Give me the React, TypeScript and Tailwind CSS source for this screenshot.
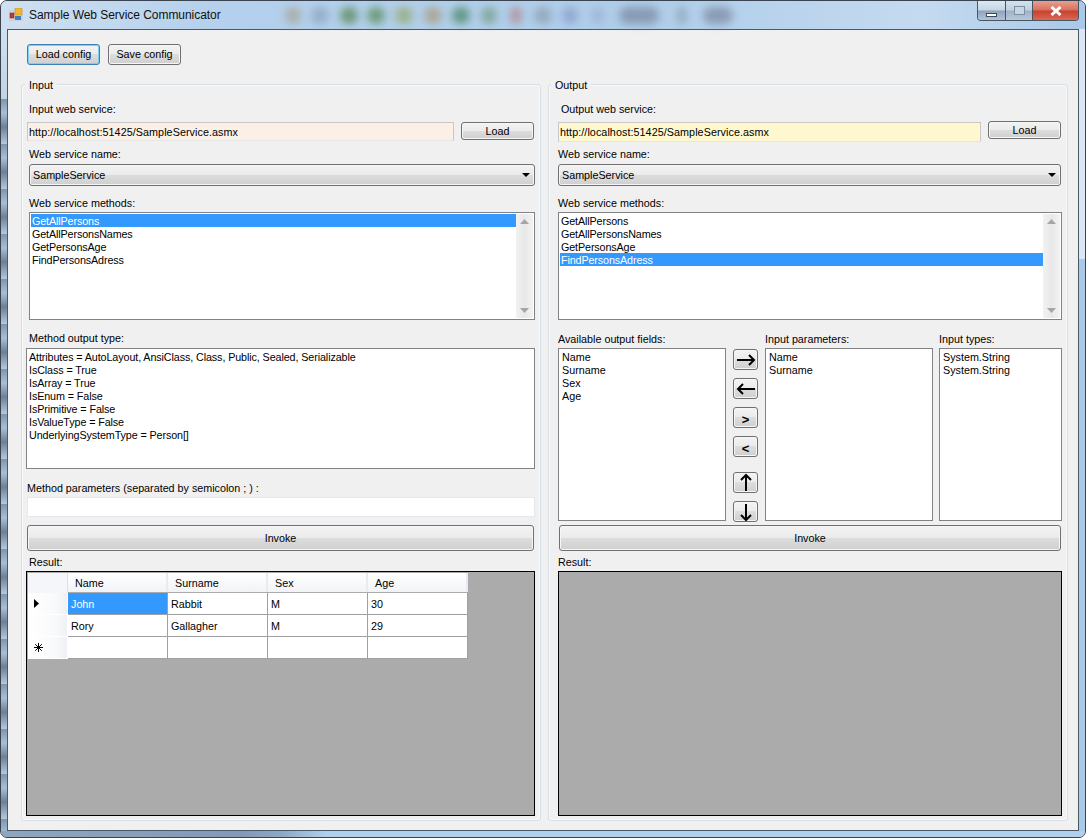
import type { ReactNode } from 'react';

const font = { fontFamily: '"Liberation Sans", Arial, sans-serif' };

const blobs = [
  { w: 'w-[16px]', ml: 'ml-0', c: 'bg-[#a8a89a]' },
  { w: 'w-[18px]', ml: 'ml-[10px]', c: 'bg-[#8fa6c0]' },
  { w: 'w-[18px]', ml: 'ml-[11px]', c: 'bg-[#5f8a5c]' },
  { w: 'w-[18px]', ml: 'ml-[9px]', c: 'bg-[#5f9060]' },
  { w: 'w-[18px]', ml: 'ml-[10px]', c: 'bg-[#97aa78]' },
  { w: 'w-[18px]', ml: 'ml-[11px]', c: 'bg-[#a89f80]' },
  { w: 'w-[18px]', ml: 'ml-[10px]', c: 'bg-[#4f8a68]' },
  { w: 'w-[16px]', ml: 'ml-[11px]', c: 'bg-[#7ba08c]' },
  { w: 'w-[12px]', ml: 'ml-[13px]', c: 'bg-[#b08a90]' },
  { w: 'w-[18px]', ml: 'ml-[12px]', c: 'bg-[#8ea2b4]' },
  { w: 'w-[16px]', ml: 'ml-[10px]', c: 'bg-[#8c9fcc]' },
  { w: 'w-[14px]', ml: 'ml-[13px]', c: 'bg-[#9db5d2]' },
  { w: 'w-[40px]', ml: 'ml-[14px]', c: 'bg-[#7f8fa6]' },
  { w: 'w-[8px]', ml: 'ml-[19px]', c: 'bg-[#8a9bb2]' },
  { w: 'w-[30px]', ml: 'ml-[17px]', c: 'bg-[#7f8fa6]' },
];

function Label({ children, className = '' }: { children: ReactNode; className?: string }) {
  return <div className={`h-[13px] leading-[13px] whitespace-nowrap ${className}`}>{children}</div>;
}

function Btn({ children, className = '', focused }: { children: ReactNode; className?: string; focused?: boolean }) {
  return (
    <div
      className={`flex items-center justify-center rounded-[3px] border leading-none bg-[linear-gradient(#f3f3f3_0%,#ebebeb_48%,#dddddd_50%,#cfcfcf_100%)] ${
        focused
          ? 'border-[#3c7fb1] shadow-[inset_0_0_0_1px_#7fd0f0]'
          : 'border-[#707070] shadow-[inset_0_0_0_1px_#f6f6f6]'
      } ${className}`}
    >
      {children}
    </div>
  );
}

function Box({ items, selected, className = '', scroll, inset }: { items: string[]; selected?: number; className?: string; scroll?: boolean; inset?: boolean }) {
  return (
    <div className={`flex bg-white border border-[#828282] ${className}`}>
      <div className={`flex-1 min-w-0 pt-px ${inset ? 'pl-[2px]' : 'pl-px'} ${scroll ? '' : 'pr-px'}`}>
        {items.map((item, i) => (
          <div
            key={item + i}
            className={`h-[13px] leading-[15px] pl-[1px] whitespace-nowrap ${i === selected ? 'bg-[#3399ff] text-white' : ''}`}
          >
            {item}
          </div>
        ))}
      </div>
      {scroll && (
        <div className="w-[17px] my-px mr-px bg-[linear-gradient(90deg,#f2f2f2,#e8e8e8_50%,#f2f2f2)] flex flex-col items-center justify-between py-[5px]">
          <svg width="9" height="5" viewBox="0 0 9 5"><path d="M4.5 0 9 5H0z" fill="#a6a6a6" /></svg>
          <svg width="9" height="5" viewBox="0 0 9 5"><path d="M0 0h9L4.5 5z" fill="#a6a6a6" /></svg>
        </div>
      )}
    </div>
  );
}

function Select({ className = '' }: { className?: string }) {
  return (
    <Btn className={`!justify-between h-[22px] pl-[3px] pr-[4px] ${className}`}>
      <span>SampleService</span>
      <svg width="8" height="4" viewBox="0 0 8 4"><path d="M0 0h8L4 4z" fill="#000" /></svg>
    </Btn>
  );
}

function Arrow({ d }: { d: string }) {
  return (
    <svg width="20" height="20" viewBox="0 0 20 20" fill="none" stroke="#000" strokeWidth="2">
      <path d={d} />
    </svg>
  );
}

function Group({ title, legendClass, children, className = '' }: { title: string; legendClass: string; children: ReactNode; className?: string }) {
  return (
    <div className={`flex flex-col h-[737px] rounded-[3px] border border-[#d5dfe5] shadow-[inset_0_0_0_1px_#f8f9fa] ${className}`}>
      <div className={`h-[13px] leading-[15px] -mt-[7px] w-fit px-[4px] bg-[#f0f0f0] ${legendClass}`}>{title}</div>
      {children}
    </div>
  );
}

function Grid({ children }: { children?: ReactNode }) {
  return <div className="h-[245px] mt-[2px] bg-[#ababab] border border-black p-px">{children}</div>;
}

const columns = ['Name', 'Surname', 'Sex', 'Age'];
const rows = [
  ['John', 'Rabbit', 'M', '30'],
  ['Rory', 'Gallagher', 'M', '29'],
  ['', '', '', ''],
];

function ResultTable() {
  return (
    <div className="w-[440px]">
      <div className="flex h-[20px]">
        <div className="w-[40px] bg-[#f4f6f9] border-r border-[#e0e0e0]" />
        {columns.map((c) => (
          <div
            key={c}
            className="w-[100px] h-[19px] pl-[7px] leading-[20px] border-r-2 border-[#e8ecf2] bg-[linear-gradient(#ffffff_0%,#f8f9fb_50%,#f2f3f6_100%)]"
          >
            {c}
          </div>
        ))}
      </div>
      {rows.map((r, i) => (
        <div key={i} className="flex h-[22px]">
          <div className="w-[40px] h-[22px] flex items-center pl-[6px] bg-[linear-gradient(90deg,#ffffff_0%,#f8f9fb_75%,#eef0f3_100%)] border-r border-b border-[#ffffff]">
            {i === 0 && (
              <svg width="5" height="9" viewBox="0 0 5 9"><path d="M0 0l5 4.5L0 9z" fill="#000" /></svg>
            )}
            {i === 2 && (
              <svg width="9" height="9" viewBox="0 0 9 9" stroke="#000" strokeWidth="1">
                <path d="M4.5 0v9M0 4.5h9M1.2 1.2l6.6 6.6M7.8 1.2 1.2 7.8" />
              </svg>
            )}
          </div>
          {r.map((cell, j) => (
            <div
              key={j}
              className={`w-[100px] h-[22px] pl-[3px] leading-[23px] border-r border-b border-[#a0a0a0] ${
                i === 0 && j === 0 ? 'bg-[#3399ff] text-white' : 'bg-white'
              }`}
            >
              {cell}
            </div>
          ))}
        </div>
      ))}
    </div>
  );
}

export default function App() {
  return (
    <div
      style={font}
      className="w-[1086px] h-[838px] overflow-hidden flex flex-col rounded-[7px] border border-[#3a4350] text-[10.75px] text-black bg-[#a9c9e8]"
    >
      <div className="h-[28px] shrink-0 flex items-center bg-[linear-gradient(90deg,#cfe0f1_0%,#b4d0ec_20%,#afcde9_60%,#c4daf0_85%,#a9c9e8_100%)]">
        <svg className="ml-[8px] shrink-0" width="14" height="14" viewBox="0 0 14 14">
          <rect x="0" y="2" width="14" height="11" fill="#cfd3d8" />
          <rect x="1" y="5" width="4" height="5" fill="#c0392b" stroke="#7a2a20" strokeWidth="0.5" />
          <rect x="6" y="0" width="7" height="7" fill="#f2b632" stroke="#b8862a" strokeWidth="0.5" />
          <rect x="6" y="8" width="6" height="4" fill="#3b7fc4" />
        </svg>
        <div className="ml-[6px] w-[256px] text-[12px] tracking-[-0.05px] text-[#101010] whitespace-nowrap">
          Sample Web Service Communicator
        </div>
        <div className="flex items-center">
          {blobs.map((b, i) => (
            <div key={i} className={`h-[17px] rounded-full blur-[4px] opacity-80 ${b.w} ${b.ml} ${b.c}`} />
          ))}
        </div>
        <div className="ml-auto mr-[6px] -mt-[8px] h-[20px] flex rounded-b-[4px] border border-t-0 border-[#4a5564] overflow-hidden">
          <div className="w-[28px] flex items-end justify-center pb-[3px] border-r border-[#4a5564] bg-[linear-gradient(#dce8f4_0%,#c6d6e6_48%,#8ea4ba_52%,#b0c4d8_100%)]">
            <div className="w-[11px] h-[4px] bg-white border border-[#3c4a5c]" />
          </div>
          <div className="w-[27px] flex items-center justify-center border-r border-[#4a5564] bg-[linear-gradient(#d4e2f0_0%,#c0d0e0_48%,#9fb3c6_52%,#b6c8da_100%)]">
            <div className="w-[11px] h-[9px] border border-[#7f8fa0] bg-[#c6d6e4]" />
          </div>
          <div className="w-[45px] flex items-center justify-center bg-[linear-gradient(#e8a090_0%,#d8705c_48%,#c8402c_52%,#d86a54_100%)]">
            <svg width="12" height="10" viewBox="0 0 12 10" stroke="#fff" strokeWidth="3">
              <path d="M1.5 1l9 8M10.5 1l-9 8" />
            </svg>
          </div>
        </div>
      </div>

      <div className="flex h-[802px] shrink-0">
        <div className="w-[6px] flex flex-col">
          <div className="h-[70px] bg-[linear-gradient(#cfe0f1,#c2d3e2)]" />
          <div className="flex-1 bg-[repeating-linear-gradient(#7e95ae_0px,#a7bfd6_14px,#6c8096_28px,#b4c9de_45px)]" />
        </div>
        <div className="w-[1072px] border border-[#4b5866] bg-[#f0f0f0]">
          <div className="flex pl-[19px] pt-[14px] gap-[8px]">
            <Btn focused className="w-[73px] h-[21px]">Load config</Btn>
            <Btn className="w-[73px] h-[21px]">Save config</Btn>
          </div>

          <div className="flex mt-[19px] pl-[13px] gap-[7px]">
            <Group title="Input" legendClass="ml-[3px]" className="w-[520px]">
              <Label className="mt-[12px] ml-[7px]">Input web service:</Label>
              <div className="flex mt-[6px] ml-[5px] gap-[7px]">
                <div className="w-[427px] h-[19px] pl-[1px] leading-[19px] tracking-[0.07px] bg-[#fbf0e6] border border-[#c8c8c8] border-b-[#e6e6e6]">
                  http://localhost:51425/SampleService.asmx
                </div>
                <Btn className="w-[73px] h-[18px]">Load</Btn>
              </div>
              <Label className="mt-[7px] ml-[7px]">Web service name:</Label>
              <Select className="mt-[3px] ml-[7px] w-[506px]" />
              <Label className="mt-[11px] ml-[7px]">Web service methods:</Label>
              <Box
                scroll
                selected={0}
                items={['GetAllPersons', 'GetAllPersonsNames', 'GetPersonsAge', 'FindPersonsAdress']}
                className="mt-[2px] ml-[7px] w-[506px] h-[108px] tracking-[-0.12px]"
              />
              <Label className="mt-[12px] ml-[7px]">Method output type:</Label>
              <Box
                items={[
                  'Attributes = AutoLayout, AnsiClass, Class, Public, Sealed, Serializable',
                  'IsClass = True',
                  'IsArray = True',
                  'IsEnum = False',
                  'IsPrimitive = False',
                  'IsValueType = False',
                  'UnderlyingSystemType = Person[]',
                ]}
                className="mt-[3px] ml-[4px] w-[509px] h-[121px] tracking-[-0.1px]"
              />
              <Label className="mt-[13px] ml-[5px]">Method parameters (separated by semicolon ; ) :</Label>
              <div className="mt-[2px] ml-[5px] w-[508px] h-[20px] bg-white border border-[#e3e9ef]" />
              <Btn className="mt-[8px] ml-[5px] w-[507px] h-[26px]">Invoke</Btn>
              <Label className="mt-[5px] ml-[7px]">Result:</Label>
              <div className="ml-[4px] w-[509px]">
                <Grid>
                  <ResultTable />
                </Grid>
              </div>
            </Group>

            <Group title="Output" legendClass="ml-[2px]" className="w-[520px]">
              <Label className="mt-[12px] ml-[12px]">Output web service:</Label>
              <div className="flex mt-[6px] ml-[9px] gap-[7px]">
                <div className="w-[423px] h-[20px] pl-[1px] leading-[19px] tracking-[0.07px] bg-[#fff8cf] border border-[#c8c8c8] border-b-[#e6e6e6]">
                  http://localhost:51425/SampleService.asmx
                </div>
                <Btn className="w-[73px] h-[18px] -mt-px">Load</Btn>
              </div>
              <Label className="mt-[6px] ml-[9px]">Web service name:</Label>
              <Select className="mt-[3px] ml-[9px] w-[503px]" />
              <Label className="mt-[11px] ml-[9px]">Web service methods:</Label>
              <Box
                scroll
                selected={3}
                items={['GetAllPersons', 'GetAllPersonsNames', 'GetPersonsAge', 'FindPersonsAdress']}
                className="mt-[2px] ml-[9px] w-[504px] h-[108px] tracking-[-0.12px]"
              />
              <div className="flex h-[188px] mt-[13px] ml-[9px]">
                <div className="w-[168px]">
                  <Label>Available output fields:</Label>
                  <Box inset items={['Name', 'Surname', 'Sex', 'Age']} className="mt-[2px] h-[173px]" />
                </div>
                <div className="ml-[7px] mt-[16px] w-[25px] flex flex-col gap-[8px]">
                  <Btn className="h-[21px] shrink-0"><Arrow d="M1 10h17M13 5l5 5-5 5" /></Btn>
                  <Btn className="h-[21px] shrink-0"><Arrow d="M19 10H2M7 5l-5 5 5 5" /></Btn>
                  <Btn className="h-[21px] shrink-0 pt-[3px] text-[13px] font-bold">&gt;</Btn>
                  <Btn className="h-[21px] shrink-0 pt-[3px] text-[13px] font-bold">&lt;</Btn>
                  <Btn className="h-[21px] shrink-0 mt-[7px]"><Arrow d="M10 18V2M5 7l5-5 5 5" /></Btn>
                  <Btn className="h-[21px] shrink-0"><Arrow d="M10 2v16M5 13l5 5 5-5" /></Btn>
                </div>
                <div className="ml-[7px] w-[168px]">
                  <Label>Input parameters:</Label>
                  <Box inset items={['Name', 'Surname']} className="mt-[2px] h-[173px]" />
                </div>
                <div className="ml-[6px] w-[123px]">
                  <Label>Input types:</Label>
                  <Box inset items={['System.String', 'System.String']} className="mt-[2px] h-[173px]" />
                </div>
              </div>
              <Btn className="mt-[4px] ml-[10px] w-[502px] h-[26px]">Invoke</Btn>
              <Label className="mt-[5px] ml-[9px]">Result:</Label>
              <div className="ml-[9px] w-[504px]">
                <Grid />
              </div>
            </Group>
          </div>
        </div>
        <div className="w-[6px] flex flex-col">
          <div className="h-[230px] bg-[#dbe8f4]" />
          <div className="flex-1 bg-[#a9c9e8]" />
        </div>
      </div>

      <div className="flex-1 bg-[linear-gradient(90deg,#8fa6c0_0%,#8399b5_22%,#8ea8c4_26%,#b0d0ee_30%,#b0d0ee_100%)]" />
    </div>
  );
}
